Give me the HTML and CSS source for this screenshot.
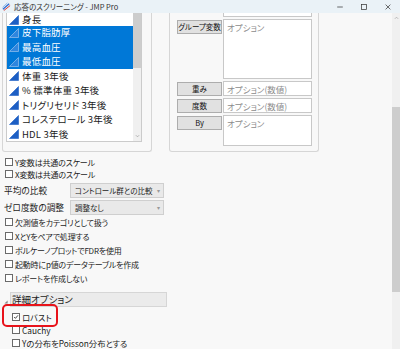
FILE: index.html
```html
<!DOCTYPE html>
<html lang="ja">
<head>
<meta charset="utf-8">
<title>応答のスクリーニング - JMP Pro</title>
<link rel="stylesheet" href="styles.css">
</head>
<body>
<div class="window">
  <div class="titlebar">
    <svg class="appicon" viewBox="0 0 10 10">
      <path d="M1 8 L8 2" stroke="#2a6bd1" stroke-width="1.4"/>
      <path d="M2 9.5 L9 4" stroke="#d9403a" stroke-width="1.1"/>
      <path d="M0.5 6 L6 1" stroke="#7aaee8" stroke-width="0.9"/>
    </svg>
    <span class="title">応答のスクリーニング - JMP Pro</span>
    <div class="controls">
      <div class="ctl"><svg viewBox="0 0 10 10" class="ctl-ic"><path d="M1.5 5 H8.5" stroke="#333" stroke-width="0.9"/></svg></div>
      <div class="ctl"><svg viewBox="0 0 10 10" class="ctl-ic"><rect x="2" y="2" width="6" height="6" fill="none" stroke="#333" stroke-width="0.9"/></svg></div>
      <div class="ctl"><svg viewBox="0 0 10 10" class="ctl-ic"><path d="M2 2 L8 8 M8 2 L2 8" stroke="#333" stroke-width="0.9"/></svg></div>
    </div>
  </div>
  <div class="body">
    <div class="content">
      <div class="top">
        <div class="listpanel">
          <div class="listbox">
            <ul class="list">
              <li class="row first"><svg class="cont" viewBox="0 0 10 10"><path d="M0.5 9.5 L9.5 0.5 V9.5 Z"/></svg>身長</li>
              <li class="row sel"><svg class="cont" viewBox="0 0 10 10"><path d="M0.5 9.5 L9.5 0.5 V9.5 Z"/></svg>皮下脂肪厚</li>
              <li class="row sel"><svg class="cont" viewBox="0 0 10 10"><path d="M0.5 9.5 L9.5 0.5 V9.5 Z"/></svg>最高血圧</li>
              <li class="row sel"><svg class="cont" viewBox="0 0 10 10"><path d="M0.5 9.5 L9.5 0.5 V9.5 Z"/></svg>最低血圧</li>
              <li class="row"><svg class="cont" viewBox="0 0 10 10"><path d="M0.5 9.5 L9.5 0.5 V9.5 Z"/></svg>体重 3年後</li>
              <li class="row"><svg class="cont" viewBox="0 0 10 10"><path d="M0.5 9.5 L9.5 0.5 V9.5 Z"/></svg>% 標準体重 3年後</li>
              <li class="row"><svg class="cont" viewBox="0 0 10 10"><path d="M0.5 9.5 L9.5 0.5 V9.5 Z"/></svg>トリグリセリド 3年後</li>
              <li class="row"><svg class="cont" viewBox="0 0 10 10"><path d="M0.5 9.5 L9.5 0.5 V9.5 Z"/></svg>コレステロール 3年後</li>
              <li class="row"><svg class="cont" viewBox="0 0 10 10"><path d="M0.5 9.5 L9.5 0.5 V9.5 Z"/></svg>HDL 3年後</li>
            </ul>
            <div class="lscroll">
              <div class="lthumb"></div>
              <svg class="sarrow" viewBox="0 0 6 4"><path d="M1 1 L3 3 L5 1" fill="none" stroke="#9a9a9a" stroke-width="0.8"/></svg>
            </div>
          </div>
        </div>
        <div class="castpanel">
          <div class="cast-row first">
            <div class="btn-spacer"></div>
            <div class="dropbox cut"></div>
          </div>
          <div class="cast-row">
            <div class="btn">グループ変数</div>
            <div class="dropbox tall">オプション</div>
          </div>
          <div class="cast-row">
            <div class="btn">重み</div>
            <div class="dropbox">オプション(数値)</div>
          </div>
          <div class="cast-row">
            <div class="btn">度数</div>
            <div class="dropbox">オプション(数値)</div>
          </div>
          <div class="cast-row">
            <div class="btn">By</div>
            <div class="dropbox by">オプション</div>
          </div>
        </div>
      </div>

      <div class="options">
        <div class="cb-row narrow"><span class="cb"></span>Y変数は共通のスケール</div>
        <div class="cb-row narrow"><span class="cb"></span>X変数は共通のスケール</div>
        <div class="sel-row first"><span class="sel-label">平均の比較</span><div class="combo">コントロール群との比較<span class="caret">▾</span></div></div>
        <div class="sel-row"><span class="sel-label">ゼロ度数の調整</span><div class="combo">調整なし<span class="caret">▾</span></div></div>
        <div class="cb-row"><span class="cb"></span>欠測値をカテゴリとして扱う</div>
        <div class="cb-row"><span class="cb"></span>XとYをペアで処理する</div>
        <div class="cb-row"><span class="cb"></span>ボルケーノプロットでFDRを使用</div>
        <div class="cb-row"><span class="cb"></span>起動時にp値のデータテーブルを作成</div>
        <div class="cb-row"><span class="cb"></span>レポートを作成しない</div>

        <div class="detail-head">
          <svg class="disclosure" viewBox="0 0 5 5"><path d="M4.5 0.5 V4.5 H0.5 Z" fill="#8a8a8a"/></svg>
          <div class="detail-bar">詳細オプション</div>
        </div>
        <div class="cb-row detail robust"><span class="cb checked"><svg viewBox="0 0 8 8"><path d="M1.5 4 L3.3 5.8 L6.6 1.8" fill="none" stroke="#222" stroke-width="1.1"/></svg></span>ロバスト<span class="highlight"></span></div>
        <div class="cb-row detail"><span class="cb"></span>Cauchy</div>
        <div class="cb-row detail"><span class="cb"></span>Yの分布をPoisson分布とする</div>
      </div>
    </div>
    <div class="winscroll">
      <svg class="uparrow" viewBox="0 0 6 4"><path d="M1 3 L3 1 L5 3" fill="none" stroke="#a0a0a0" stroke-width="0.8"/></svg>
      <div class="wthumb"></div>
    </div>
  </div>
</div>
</body>
</html>
```

FILE: styles.css
```css
* { box-sizing: border-box; }
html, body { margin: 0; padding: 0; }
body {
  width: 400px;
  height: 349px;
  overflow: hidden;
  background: #f8f8f8;
  color: #1c1c1c;
  font-family: "Noto Sans CJK JP", "Noto Sans", sans-serif;
  font-feature-settings: "palt";
}
.window { display: flex; flex-direction: column; height: 349px; }

/* title bar */
.titlebar {
  height: 13px;
  background: #eaf2f7;
  display: flex;
  align-items: center;
  padding-left: 2px;
}
.appicon { width: 9px; height: 9px; }
.title { font-size: 7.5px; margin-left: 3px; color: #333; line-height: 1; }
.controls { margin-left: auto; display: flex; }
.ctl { width: 24px; height: 13px; display: flex; align-items: center; justify-content: center; }
.ctl-ic { width: 8px; height: 8px; }

.body { flex: 1; display: flex; min-height: 0; }
.content { flex: 1; min-width: 0; }

/* window scrollbar */
.winscroll {
  width: 8px;
  background: #f0f0f0;
  display: flex;
  flex-direction: column;
  align-items: center;
}
.uparrow { width: 5px; height: 4px; margin-top: 3px; }
.wthumb { width: 8px; height: 185px; margin-top: 87px; background: #cdcdcd; }

/* top area */
.top { display: flex; height: 139px; }
.listpanel {
  margin-left: 2px;
  width: 150px;
  border: 1px solid #d6d6d6;
  border-top: none;
  border-radius: 0 0 3px 3px;
  padding: 0 9px 9px 3px;
}
.listbox {
  height: 100%;
  display: flex;
  background: #fff;
  border: 1px solid #cbcbcb;
  border-top: none;
  overflow: hidden;
}
.list {
  list-style: none;
  margin: 0;
  padding: 0;
  flex: 1;
  min-width: 0;
}
.row {
  height: 14.5px;
  display: flex;
  align-items: center;
  padding-left: 2px;
  font-size: 9.5px;
  line-height: 11px;
  letter-spacing: 0.2px;
  white-space: nowrap;
  color: #1a1a1a;
}
.row.first { height: 12.5px; align-items: flex-end; padding-bottom: 1px; }
.row.sel { background: #0078d7; color: #fff; }
.cont { width: 10px; height: 10px; margin-right: 3px; flex: none; }
.cont path { fill: #1d5fc4; stroke: #1d5fc4; stroke-width: 0.6; stroke-linejoin: round; }
.row.sel .cont path { fill: #2f86de; stroke: #8ab9ea; stroke-width: 0.8; }

.lscroll {
  width: 8px;
  background: #f0f0f0;
  display: flex;
  flex-direction: column;
  align-items: center;
}
.lthumb { width: 8px; height: 55px; background: #cdcdcd; }
.sarrow { width: 5px; height: 4px; margin-top: auto; margin-bottom: 3px; }

.castpanel {
  margin-left: 17px;
  width: 150px;
  border: 1px solid #d6d6d6;
  border-top: none;
  border-radius: 0 0 3px 3px;
  padding: 0 6px 8px 7px;
}
.cast-row { display: flex; align-items: flex-start; margin-top: 2px; }
.cast-row.first { margin-top: 0; }
.btn-spacer { width: 46px; }
.btn {
  width: 45px;
  height: 14px;
  margin-top: 1px;
  margin-right: 1px;
  background: #e1e1e1;
  border: 1px solid #adadad;
  font-size: 7.5px;
  line-height: 12px;
  text-align: center;
  color: #111;
  white-space: nowrap;
  overflow: hidden;
}
.dropbox {
  flex: 1;
  height: 15px;
  background: #fff;
  border: 1px solid #c8c8c8;
  font-size: 8.5px;
  line-height: 12px;
  padding: 1px 3px;
  color: #8c8c8c;
  white-space: nowrap;
}
.dropbox.cut { height: 4px; border-top: none; padding: 0; }
.dropbox.tall { height: 60px; }
.dropbox.by { height: 31px; }

/* options */
.options { padding-top: 4px; }
.cb-row {
  height: 14px;
  display: flex;
  align-items: center;
  padding-left: 5px;
  font-size: 8px;
  letter-spacing: -0.2px;
  white-space: nowrap;
  color: #1c1c1c;
}
.cb-row.narrow { height: 12px; }
.cb {
  width: 8px;
  height: 8px;
  border: 1px solid #6a6a6a;
  background: #fff;
  margin-right: 2px;
  flex: none;
  display: flex;
}
.cb svg { width: 100%; height: 100%; }

.sel-row { display: flex; align-items: center; height: 15px; margin-top: 2px; padding-left: 4px; font-size: 8.7px; }
.sel-row.first { margin-top: 3px; }
.sel-label { width: 66px; white-space: nowrap; }
.combo {
  width: 94px;
  height: 15px;
  background: #e9e9e9;
  border: 1px solid #cfcfcf;
  padding-left: 4px;
  display: flex;
  align-items: center;
  white-space: nowrap;
  font-size: 7.5px;
}
.caret { margin-left: auto; margin-right: 3px; color: #999; font-size: 6px; }

.detail-head { display: flex; align-items: center; margin-top: 7px; padding-left: 4px; }
.disclosure { width: 4px; height: 4px; margin-top: 5px; }
.detail-bar {
  margin-left: 2px;
  width: 157px;
  height: 15px;
  background: #ebebeb;
  border: 1px solid #d6d6d6;
  font-size: 9.5px;
  line-height: 13px;
  padding-left: 1px;
  color: #1c1c1c;
}
.cb-row.detail { height: 13px; padding-left: 12px; font-size: 8.3px; letter-spacing: 0; }
.cb-row.robust { margin-top: 3px; position: relative; }
.highlight {
  position: absolute;
  left: 2px;
  top: -6px;
  width: 56px;
  height: 23px;
  border: 2px solid #e8131b;
  border-radius: 5px;
}
```
